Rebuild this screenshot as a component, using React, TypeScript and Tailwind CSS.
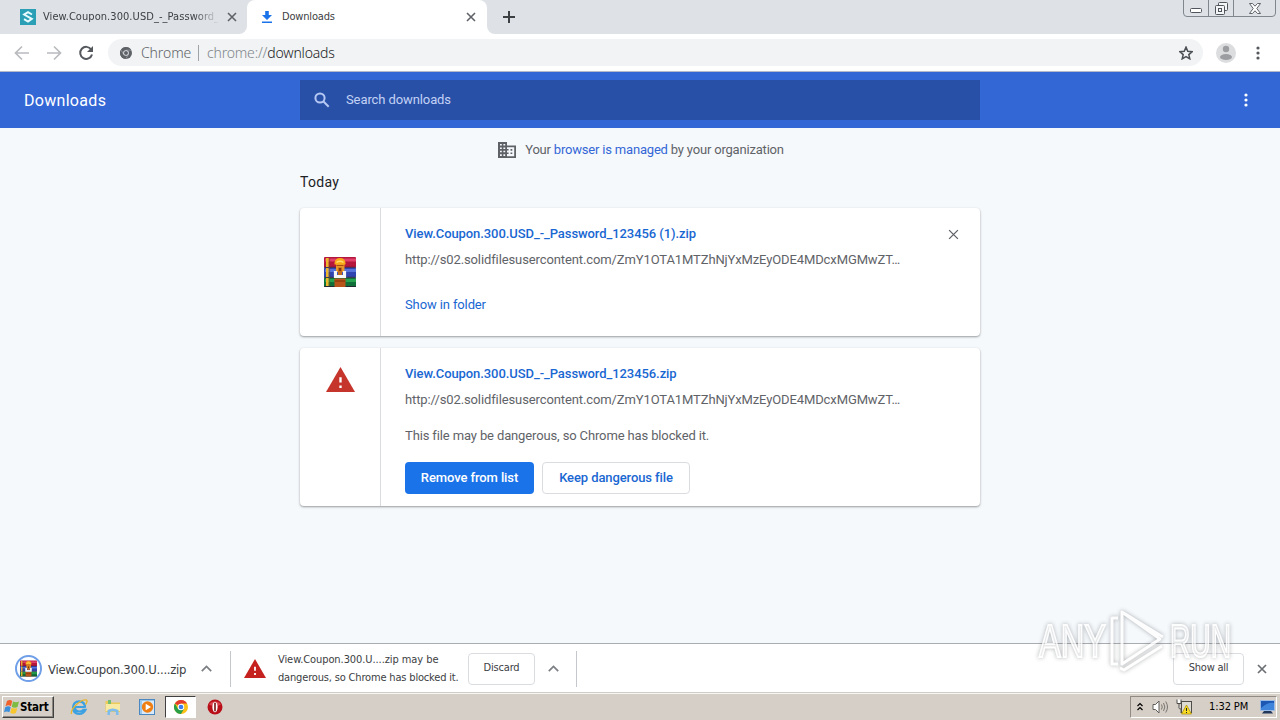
import type { ReactNode } from 'react';

const TAHOMA = "font-['DejaVu_Sans_Condensed','DejaVu_Sans',sans-serif]";

function CloseIcon({ size, color, stroke = 1.6 }: { size: number; color: string; stroke?: number }) {
  return (
    <svg width={size} height={size} viewBox="0 0 10 10" fill="none" stroke={color} strokeWidth={stroke}>
      <path d="M1 1l8 8M9 1l-8 8" />
    </svg>
  );
}

function ChromeLogo({ mono = false, size = 14 }: { mono?: boolean; size?: number }) {
  return (
    <svg width={size} height={size} viewBox="0 0 24 24">
      <circle cx="12" cy="12" r="12" fill={mono ? '#5f6368' : '#fbc116'} />
      <path d="M12 12L1.6 6A12 12 0 0 1 22.4 6H12z" fill={mono ? '#5f6368' : '#e33b2e'} />
      <path d="M1.6 6A12 12 0 0 0 12 24l5.2-9L12 12 6.8 15z" fill={mono ? '#5f6368' : '#2a9f48'} />
      {mono && <path d="M12 6.4h10.5M7.2 14.8L2 6M16.9 14.8L11.8 23.5" stroke="#b9bdc2" strokeWidth="1" />}
      <circle cx="12" cy="12" r="5.6" fill={mono ? '#e8ebee' : '#fff'} />
      <circle cx="12" cy="12" r="4" fill={mono ? '#5f6368' : '#3b7ded'} />
    </svg>
  );
}

function WinRarIcon({ size }: { size: number }) {
  return (
    <svg width={size} height={size} viewBox="0 0 32 32">
      <rect x="0" y="1" width="32" height="10.5" rx="1" fill="#b5163c" />
      <rect x="1" y="2.5" width="31" height="3" fill="#e0406a" />
      <rect x="0" y="11.5" width="32" height="10" rx="1" fill="#3044b0" />
      <rect x="1" y="13" width="31" height="3" fill="#5673dc" />
      <rect x="0" y="21.5" width="32" height="9.5" rx="1" fill="#11703a" />
      <rect x="1" y="23" width="31" height="3" fill="#27a34f" />
      <path d="M0 11.3h32M0 21.3h32M0 30.5h32" stroke="#2a1530" strokeWidth=".8" />
      <path d="M3.3 2v9M3.3 12v9M3.3 22v8" stroke="#edb52c" strokeWidth="2.6" />
      <path d="M5.6 2v28" stroke="#7b5011" strokeWidth=".6" />
      <rect x="10.500" y="22.500" width="11" height="8.500" fill="#b9551a" />
      <rect x="10.500" y="24.500" width="11" height="1" fill="#7e3009" />
      <path d="M12 8h8.500v8h-8.500z" fill="#e8962c" />
      <path d="M10.500 8.500V7Q11 2 16 2t5.500 5v1.500z" fill="#f9a816" />
      <path d="M12.500 6.500q3.500-2.500 7 0" stroke="#ffdf70" strokeWidth="1.500" fill="none" />
      <path d="M12.500 9.500h7" stroke="#a34e0e" strokeWidth="1" />
      <path d="M11.500 15v5.500h9V15" fill="none" stroke="#f7f7f7" strokeWidth="3.200" />
      <path d="M14 11.500h4V19h-4z" fill="#c2691d" />
      <path d="M15.200 12h1.600v3h-1.600z" fill="#6c2b0a" />
    </svg>
  );
}

function WarningIcon({ width, height, color }: { width: number; height: number; color: string }) {
  return (
    <svg width={width} height={height} viewBox="0 0 22 19" preserveAspectRatio="none">
      <path d="M0 19h22L11 0z" fill={color} />
      <path d="M10.100 7.800h1.800v4h-1.800zM10.100 14h1.800v2h-1.800z" fill="#fff" />
    </svg>
  );
}

function Chevron() {
  return (
    <svg width="11" height="7" viewBox="0 0 11 7" fill="none" stroke="#7b7e83" strokeWidth="1.700">
      <path d="M.8 6.200l4.700-4.700 4.700 4.700" />
    </svg>
  );
}

function Dots({ color, height, gap }: { color: string; height: number; gap: number }) {
  const c = height / 2;
  return (
    <svg width="4" height={height} fill={color}>
      <circle cx="2" cy={c - gap} r="1.600" />
      <circle cx="2" cy={c} r="1.600" />
      <circle cx="2" cy={c + gap} r="1.600" />
    </svg>
  );
}

function TabStrip() {
  return (
    <div className={`flex h-[34px] bg-[#dee1e6] text-[11px] text-[#3c4043] ${TAHOMA}`}>
      <div className="flex w-[247px] items-center bg-white">
        <div className="flex h-full w-full items-center rounded-br-lg bg-[#dee1e6] pl-5">
          <svg width="16" height="16" viewBox="0 0 16 16" className="shrink-0">
            <rect width="16" height="16" fill="#2a9fb5" />
            <path d="M12 5.500L8 3.200 4.200 5.500 11.800 9.800 8 12.500 4 10.200" fill="none" stroke="#e8fbff" strokeWidth="2" />
          </svg>
          <span className="ml-[7px] w-[176px] overflow-hidden tracking-[0.06px] whitespace-nowrap [mask-image:linear-gradient(to_right,#000_86%,transparent)]">
            View.Coupon.300.USD_-_Password_1
          </span>
          <span className="ml-2"><CloseIcon size={10} color="#5f6368" /></span>
        </div>
      </div>
      <div className="w-[240px] bg-[#dee1e6]">
        <div className="flex h-full items-center rounded-t-lg bg-white pl-[15px]">
          <svg width="10" height="12" viewBox="0 0 10 12" fill="#1a73e8">
            <path d="M3.200 0h3.600v4H10L5 9 0 4h3.200zM0 10.500h10V12H0z" />
          </svg>
          <span className="ml-[10px] w-[176px] tracking-[-0.17px]">Downloads</span>
          <span className="ml-2"><CloseIcon size={10} color="#5f6368" /></span>
        </div>
      </div>
      <div className="bg-white">
        <div className="flex h-full w-[44px] items-center justify-center rounded-bl-lg bg-[#dee1e6]">
          <svg width="12" height="12" viewBox="0 0 12 12" stroke="#3c4043" strokeWidth="2">
            <path d="M6 0v12M0 6h12" />
          </svg>
        </div>
      </div>
      <div className="mt-[-1px] mr-1 ml-auto flex h-[18px] w-[93px] rounded-b border border-[#80868e]">
        <div className="flex w-[25px] items-end justify-center border-r border-[#80868e] pb-[3px]">
          <svg width="12" height="5"><rect x=".5" y=".5" width="11" height="4" rx="1" fill="#fff" stroke="#50555c" /></svg>
        </div>
        <div className="flex w-[25px] items-center justify-center border-r border-[#80868e]">
          <svg width="13" height="13" fill="#f4f5f7" stroke="#50555c">
            <rect x="3.500" y=".5" width="9" height="8" rx="1" />
            <rect x=".5" y="3.500" width="9" height="9" rx="1" />
            <rect x="3.500" y="6.500" width="3" height="3" />
          </svg>
        </div>
        <div className="flex flex-1 items-center justify-center">
          <svg width="12" height="11" viewBox="0 0 12 11">
            <path d="M.5.5h3L6 3.200 8.500.5h3L7.800 5.500l3.700 5h-3L6 7.800 3.500 10.500h-3l3.700-5z" fill="#fff" stroke="#50555c" strokeWidth=".9" />
          </svg>
        </div>
      </div>
    </div>
  );
}

function Toolbar() {
  return (
    <div className="flex h-[38px] items-center border-b border-[#b4bac6] bg-white text-[#5f6368]">
      <svg width="90" height="16" viewBox="0 0 90 16" fill="none" strokeWidth="1.700" className="ml-[10px] shrink-0">
        <path d="M19 8H6M12 1.500L5.500 8l6.500 6.500" stroke="#b9bbbe" />
        <path d="M37 8h13M44 1.500L50.500 8 44 14.500" stroke="#b9bbbe" />
        <path d="M81.200 4.500A6 6 0 1 0 82 9.500" stroke="#55595e" strokeWidth="2" />
        <path d="M83 1v6h-6z" fill="#55595e" />
      </svg>
      <div className="ml-2 flex h-[27px] w-[1095px] items-center rounded-full bg-[#f1f3f4] pl-3">
        <ChromeLogo mono size={12} />
        <span className="ml-[9px] w-[58px] border-r border-[#9fa3a8] font-['Noto_Sans',sans-serif] text-[14px] leading-[16px] font-light tracking-[-0.1px]">Chrome</span>
        <span className="ml-[8px] font-['Noto_Sans',sans-serif] text-[14px] leading-[16px] font-light tracking-[-0.18px] text-[#80868b]">
          chrome://<span className="text-[#202124]">downloads</span>
        </span>
        <svg width="14" height="14" viewBox="0 0 24 24" fill="none" stroke="#4d5156" strokeWidth="2.600" className="mr-[10px] ml-auto">
          <path d="M12 2l3 7 7.500.7-5.700 5 1.700 7.300L12 18.200 5.500 22l1.700-7.300-5.700-5L9 9z" />
        </svg>
      </div>
      <svg width="20" height="20" viewBox="0 0 20 20" className="ml-[13px]">
        <circle cx="10" cy="10" r="10" fill="#dcdddf" />
        <circle cx="10" cy="6" r="3.200" fill="#9b9da0" />
        <ellipse cx="10" cy="14" rx="6" ry="3" fill="#9b9da0" />
      </svg>
      <span className="ml-[20px]"><Dots color="#55595e" height={16} gap={5} /></span>
    </div>
  );
}

function DownloadsHeader() {
  return (
    <div className="flex h-14 items-center bg-[#3367d6] font-['Roboto',sans-serif]">
      <div className="w-[300px] pt-0.5 pl-6 text-[16px] tracking-[0.3px] text-white">Downloads</div>
      <div className="flex h-10 w-[680px] items-center bg-[#2950a7] pl-[14px] text-[13px] text-[#c3d2f5]">
        <svg width="16" height="16" viewBox="0 0 16 16" fill="none" stroke="#b5c8f4" strokeWidth="2">
          <circle cx="6" cy="6" r="4.600" />
          <path d="M9.500 9.500l5.200 5.200" />
        </svg>
        <span className="ml-4 tracking-[-0.1px]">Search downloads</span>
      </div>
      <span className="ml-[264px]"><Dots color="#fff" height={16} gap={5} /></span>
    </div>
  );
}

function DownloadCard({ icon, title, children, className }: { icon: ReactNode; title: ReactNode; children: ReactNode; className: string }) {
  return (
    <div className={`relative flex w-[680px] rounded bg-white shadow-[0_1px_2px_rgba(60,64,67,.4),0_1px_3px_rgba(60,64,67,.15)] ${className}`}>
      <div className="flex w-[81px] shrink-0 justify-center border-r border-[#dadce0]">{icon}</div>
      <div className="pt-[18px] pl-6">
        <div className="text-[13px] leading-4 font-medium tracking-[-0.08px] text-[#1967d2]">{title}</div>
        <div className="mt-[10px] text-[13px] leading-4 tracking-[-0.11px] whitespace-nowrap">
          http://s02.solidfilesusercontent.com/ZmY1OTA1MTZhNjYxMzEyODE4MDcxMGMwZT…
        </div>
        {children}
      </div>
    </div>
  );
}

function DownloadsPage() {
  return (
    <div className="flex h-[515px] flex-col items-center bg-[#f6f9fc] font-['Roboto',sans-serif] text-[13px] text-[#5f6368]">
      <div className="mt-[13px] flex h-[18px] items-center pl-0.5">
        <svg width="18" height="16" viewBox="0 0 18 16" fill="#5f6368">
          <path fillRule="evenodd" d="M0 0h9v3.500h9V16H0zM2 2v1.500h1.800V2zM5.400 2v1.500h1.800V2zM2 5.400v1.500h1.800V5.400zM5.400 5.400v1.500h1.800V5.400zM2 8.800v1.500h1.800V8.800zM5.400 8.800v1.500h1.800V8.800zM2 12.300V14h1.800v-1.700zM5.400 12.300V14h1.800v-1.700zM9 5.200v1.700h1.600v1.600H9v1.900h1.600V12H9v2.200h7.200v-9zM12.500 7h1.800v1.700h-1.800zM12.500 10.400h1.800v1.700h-1.800z" />
        </svg>
        <span className="ml-[9px] tracking-[-0.19px]">Your <span className="text-[#3367d6]">browser is managed</span> by your organization</span>
      </div>
      <div className="mt-[14px] w-[680px] text-[14px] leading-[18px] tracking-[0.3px] text-[#202124]">Today</div>
      <DownloadCard
        className="mt-[17px] h-[128px] shrink-0"
        icon={<div className="mt-12"><WinRarIcon size={32} /></div>}
        title="View.Coupon.300.USD_-_Password_123456 (1).zip"
      >
        <div className="mt-[29px] leading-4 tracking-[-0.12px] text-[#1967d2]">Show in folder</div>
        <div className="absolute top-[21px] right-[21px]"><CloseIcon size={11} color="#5f6368" stroke={1.200} /></div>
      </DownloadCard>
      <DownloadCard
        className="mt-3 h-[158px] shrink-0"
        icon={<div className="mt-[19px]"><WarningIcon width={29} height={25} color="#c5352b" /></div>}
        title="View.Coupon.300.USD_-_Password_123456.zip"
      >
        <div className="mt-5 leading-4 tracking-[-0.13px]">This file may be dangerous, so Chrome has blocked it.</div>
        <div className="mt-[18px] flex gap-2 font-medium tracking-[-0.1px]">
          <button className="h-8 w-[129px] rounded bg-[#1a73e8] text-white">Remove from list</button>
          <button className="h-8 w-[148px] rounded border border-[#dadce0] text-[#1967d2]">Keep dangerous file</button>
        </div>
      </DownloadCard>
    </div>
  );
}

function DownloadShelf() {
  return (
    <div className={`flex h-[50px] items-center border-t border-[#a9acb0] bg-white text-[11px] text-[#3c4043] ${TAHOMA}`}>
      <div className="ml-[15px] flex size-[27px] items-center justify-center rounded-full border-2 border-[#6f9fe8]">
        <WinRarIcon size={17} />
      </div>
      <span className="ml-[6px] w-[144px] pt-0.5 text-[13px] tracking-[-0.28px] whitespace-nowrap">View.Coupon.300.U....zip</span>
      <span className="ml-[9px]"><Chevron /></span>
      <div className="ml-[18px] h-9 w-px bg-[#c4c7cb]" />
      <span className="ml-[13px]"><WarningIcon width={22} height={19} color="#c5221f" /></span>
      <div className="ml-3 w-[181px] leading-[18px] tracking-[-0.17px] whitespace-nowrap">
        <span className="tracking-[-0.08px]">View.Coupon.300.U....zip may be</span><br />dangerous, so Chrome has blocked it.
      </div>
      <button className="ml-[9px] h-8 w-[67px] rounded border border-[#dadce0] pb-px tracking-[-0.2px]">Discard</button>
      <span className="ml-[13px]"><Chevron /></span>
      <div className="ml-[17px] h-9 w-px bg-[#c4c7cb]" />
      <button className="ml-auto h-8 w-[71px] rounded border border-[#dadce0] pb-px tracking-[-0.25px]">Show all</button>
      <span className="mr-[13px] ml-[13px]"><CloseIcon size={10} color="#6b6e73" stroke={1.700} /></span>
    </div>
  );
}

function Taskbar() {
  return (
    <div className={`flex h-[27px] items-center border-t border-[#f7f6f3] bg-[#d6cfc7] text-[11px] text-black shadow-[0_-1px_0_#cdcec8] ${TAHOMA}`}>
      <div className="ml-0.5 flex h-[22px] w-[52px] items-center border border-t-white border-r-[#404040] border-b-[#404040] border-l-white pl-px shadow-[inset_-1px_-1px_0_#8b8680]">
        <svg width="16" height="16" viewBox="0 0 16 16">
          <path d="M3 2q3-1.800 5.200 0L7 7.200q-2.500-1.700-5.500 0z" fill="#ef622c" />
          <path d="M9 2.500q3 1.500 6 0L13.500 8q-3 1.500-5.700-.300z" fill="#7dbb42" />
          <path d="M1.200 8.200q3-1.700 5.500 0l-1.300 5q-2.500-1.600-5.400 0z" fill="#3c8fdb" />
          <path d="M7.600 8.800q2.900 1.500 5.700.2l-1.400 5q-2.800 1.400-5.600-.2z" fill="#f7c52d" />
        </svg>
        <span className="pt-px text-[11.500px] font-bold tracking-[-0.2px]">Start</span>
      </div>
      <svg width="18" height="18" viewBox="0 0 18 18" className="ml-[16px]" fill="none">
        <path d="M14.500 9H4.800Q5 13.500 9.500 13.500q2.500 0 3.800-1.700h2.200Q13.500 16 9.200 16 3 15.500 3 9.500 3.300 3.500 9.300 3.300 15 3.500 15 9.700" stroke="#3ba1e2" strokeWidth="2.200" />
        <path d="M1.500 16Q.5 12 6.500 6.500T16.500 2q1.500 1-1 4.500" stroke="#e8b62d" strokeWidth="1.300" />
      </svg>
      <svg width="16" height="18" viewBox="0 0 16 18" className="ml-[17px]">
        <path d="M.5 3h5l1 1.500h8.500V14H.5z" fill="#eccb58" />
        <path d="M3 2h3v4H3z" fill="#74be70" />
        <path d="M1 6h14v7H1z" fill="#f8e9a3" />
        <path d="M2.500 17v-5q5-3 11 0v5h-2.500v-3q-3-1.500-6 0v3z" fill="#7dbced" />
      </svg>
      <svg width="16" height="16" viewBox="0 0 16 16" className="ml-[18px]">
        <rect x=".5" y=".5" width="15" height="15" fill="#9bc9ee" stroke="#4a88bf" />
        <rect x="3" y="2" width="12" height="13" fill="#d8eafa" />
        <circle cx="8.500" cy="8" r="5.700" fill="#f07f13" />
        <path d="M6.700 4.800v6.400L12 8z" fill="#fff" />
      </svg>
      <div className="ml-[10px] flex h-[22px] w-[31px] items-center justify-center border border-t-[#404040] border-r-white border-b-white border-l-[#404040] bg-white">
        <ChromeLogo size={14} />
      </div>
      <svg width="16" height="16" viewBox="0 0 16 16" className="ml-[11px]">
        <circle cx="8" cy="8" r="7.500" fill="#b80f19" />
        <path d="M2 5.500a6.500 5 0 0 1 12 0q-6 3-12 0z" fill="#d9434c" />
        <ellipse cx="8" cy="8" rx="2.600" ry="5.300" fill="#fff" />
        <rect x="7.200" y="3.400" width="1.600" height="9.200" rx=".8" fill="#711" />
      </svg>
      <div className="mr-[3px] ml-auto flex h-[22px] w-[147px] items-center border border-t-[#918b84] border-r-white border-b-white border-l-[#918b84] pl-[6px]">
        <svg width="6" height="9" viewBox="0 0 6 9" fill="none" stroke="#000" strokeWidth="1.200" className="-mt-0.5 shrink-0">
          <path d="M.5 4L3 1.500 5.500 4M.5 8L3 5.500 5.500 8" />
        </svg>
        <svg width="17" height="14" viewBox="0 0 17 14" className="ml-[9px] shrink-0" fill="none" stroke="#77746f">
          <path d="M1 4.500h2.500L7 1v12L3.500 9.500H1z" fill="#fff" stroke="#5e5c59" />
          <path d="M9.500 4.500q1.500 2.500 0 5M11.500 3q2.700 4 0 8M13.700 1.500q3.600 5.500 0 11" />
        </svg>
        <svg width="17" height="16" viewBox="0 0 17 16" className="ml-[7px] shrink-0">
          <rect x="5.500" y="2.500" width="10" height="11" fill="#dedbd3" stroke="#4f4d49" />
          <path d="M1 .5v4h4v-4M3 4.500V9q0 1 2 1v4" fill="#fff" stroke="#4f4d49" />
          <path d="M10.500 6l5 9h-10z" fill="#f8dc23" stroke="#ae8e00" strokeWidth=".7" />
          <path d="M10.500 9v3M10.500 13v1" stroke="#222" />
        </svg>
        <span className="ml-4 w-[40px] shrink-0 tracking-[-0.1px] whitespace-nowrap">1:32 PM</span>
        <svg width="15" height="14" viewBox="0 0 15 14" className="ml-[11px] shrink-0">
          <rect x=".5" y=".5" width="14" height="10" fill="#1d57b4" stroke="#9dbce5" />
          <path d="M1 8Q8 2 14 3v7H1z" fill="#3f85dc" />
          <path d="M4 11h7l2 2.500H2z" fill="#20365b" />
        </svg>
      </div>
    </div>
  );
}

function Watermark() {
  return (
    <svg width="210" height="68" viewBox="0 0 210 68" fill="none" stroke="#fff" className="pointer-events-none absolute top-[606px] left-[1036px] opacity-80 [filter:drop-shadow(0_0_2px_rgba(80,85,90,.6))]">
      <text x="3" y="51" textLength="67" lengthAdjust="spacingAndGlyphs" className="font-['Liberation_Sans',sans-serif] text-[46px]" strokeWidth="2" fill="#fff" fillOpacity=".6">ANY</text>
      <text x="134" y="51" textLength="61" lengthAdjust="spacingAndGlyphs" className="font-['Liberation_Sans',sans-serif] text-[46px]" strokeWidth="2" fill="#fff" fillOpacity=".6">RUN</text>
      <path d="M86 6v52l38-25zM86 6l41 25M82 12h-6v46h6M84 62l4 2 38-24" strokeWidth="3" strokeLinejoin="round" />
    </svg>
  );
}

export default function App() {
  return (
    <div className="relative h-[720px] w-[1280px] overflow-hidden bg-white">
      <TabStrip />
      <Toolbar />
      <DownloadsHeader />
      <DownloadsPage />
      <DownloadShelf />
      <Taskbar />
      <Watermark />
    </div>
  );
}
